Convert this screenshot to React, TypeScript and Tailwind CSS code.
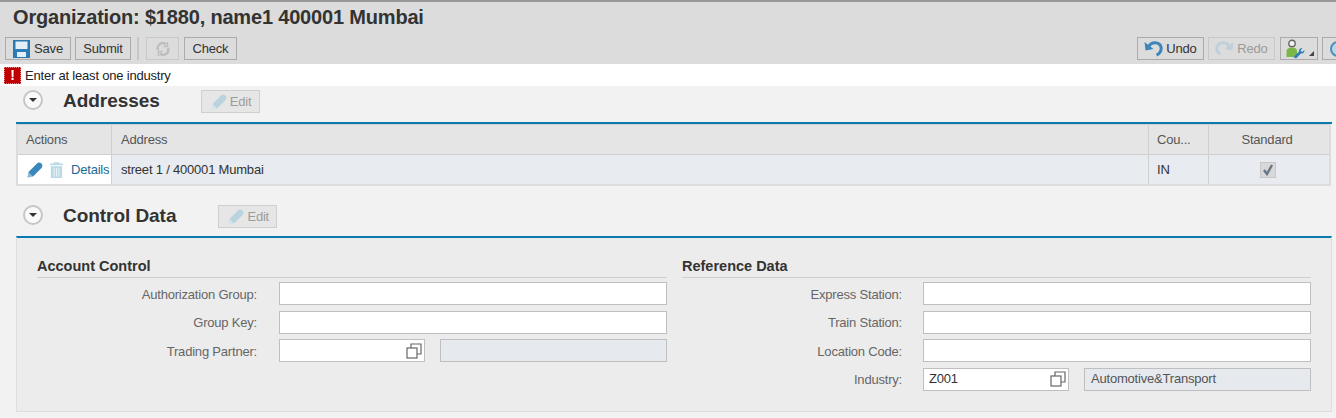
import React from "react";

const Btn = ({ children, className = "", disabled = false }: { children: React.ReactNode; className?: string; disabled?: boolean }) => (
  <div className={`h-[23px] flex items-center justify-center shrink-0 border text-[13px] tracking-[-0.2px] leading-none ${disabled ? "border-[#c8c8c8] text-[#9a9a9a]" : "border-[#ababab] text-[#333333]"} ${className}`}>
    {children}
  </div>
);

const Pencil = ({ color, size = 16 }: { color: string; size?: number }) => (
  <svg width={size} height={size} viewBox="0 0 16 16" className="shrink-0">
    <path d="M0.5 15.5 L1.5 10 L10 1.5 C11.2 0.3 13 0.3 14.4 1.6 C15.7 3 15.7 4.8 14.5 6 L6 14.5 Z" fill={color} />
    <path d="M0.5 15.5 L1.5 10 L6 14.5 Z" fill="#ffffff" fillOpacity="0.4" />
  </svg>
);

const Collapse = () => (
  <div className="w-[20px] h-[20px] rounded-full bg-[#fafafa] border-2 border-[#c6c6c6] flex items-center justify-center shrink-0">
    <div className="w-0 h-0 border-l-[4px] border-r-[4px] border-t-[4px] border-l-transparent border-r-transparent border-t-[#333333]" />
  </div>
);

const Section = ({ title, className, editClass }: { title: string; className: string; editClass: string }) => (
  <div className={`flex items-center pl-[23px] ${className}`}>
    <Collapse />
    <div className="ml-[20px] text-[19px] font-bold text-[#333333] leading-none tracking-[-0.05px]">{title}</div>
    <div className={`mt-[3px] h-[23px] w-[59px] flex items-center pl-[9px] gap-[3px] border border-[#cfcfcf] bg-[#e6e6e6] text-[13px] tracking-[-0.2px] text-[#9c9c9c] ${editClass}`}>
      <Pencil color="#b9d3df" />
      <span>Edit</span>
    </div>
  </div>
);

const Copy = () => (
  <svg width="16" height="16" viewBox="0 0 16 16" fill="none" stroke="#666666" strokeWidth="1.2" className="shrink-0">
    <rect x="1" y="5" width="10" height="10" />
    <path d="M5 5 V1 H15 V11 H11" />
  </svg>
);

const Label = ({ children, className = "pr-[22px]" }: { children: React.ReactNode; className?: string }) => (
  <div className={`text-right text-[13px] tracking-[-0.2px] text-[#666666] pt-[1px] leading-none ${className}`}>{children}</div>
);

const Input = () => <div className="h-[23px] bg-white border border-[#bfbfbf]" />;

const Help = ({ value = "" }: { value?: string }) => (
  <div className="h-[23px] w-[146px] bg-white border border-[#bfbfbf] flex items-center justify-between pl-[5px] pr-[2px] text-[13px] tracking-[-0.2px] text-[#333333]">
    <span>{value}</span>
    <Copy />
  </div>
);

const Desc = ({ value = "" }: { value?: string }) => (
  <div className="h-[23px] ml-[15px] flex-1 bg-[#e6e9ed] border border-[#bfbfbf] flex items-center pl-[6px] text-[13px] tracking-[-0.2px] text-[#555555]">{value}</div>
);

const Group = ({ title, rows, className, gridClass }: { title: string; rows: React.ReactNode[][]; className: string; gridClass: string }) => (
  <div className={className}>
    <div className="h-[28px] pt-[6px] border-b border-[#cfcfcf] text-[14.5px] font-bold text-[#333333] leading-[20px]">{title}</div>
    <div className={`grid items-center auto-rows-[23px] gap-y-[5.5px] mt-[4px] ${gridClass}`}>
      {rows.flat().map((c, i) => (
        <React.Fragment key={i}>{c}</React.Fragment>
      ))}
    </div>
  </div>
);

const headCell = "h-[31px] bg-[#e5e5e5] border-y border-[#cfcfcf] flex items-center text-[#555555]";

export default function App() {
  return (
    <div className="w-[1336px] h-[418px] overflow-hidden bg-[#f2f2f2] font-['Liberation_Sans',Arial,sans-serif]">
      <div className="h-[64px] bg-[#dcdcdc] border-t-2 border-[#999999] overflow-hidden">
        <div className="h-[35px] pl-[13px] pt-[3px] text-[20px] font-bold leading-[24px] tracking-[-0.18px] text-[#333333]">
          Organization: $1880, name1 400001 Mumbai
        </div>
        <div className="flex items-center pl-[5px] w-[1356px]">
          <Btn className="w-[66px] gap-[4px]">
            <svg width="17" height="18" viewBox="0 0 17 18" className="shrink-0">
              <rect x="0.75" y="0.75" width="15.5" height="16.5" fill="#2a7db8" stroke="#2a78b0" strokeWidth="1.5" />
              <rect x="2.5" y="1.5" width="12" height="7.5" fill="#e3eef6" />
              <rect x="4" y="12" width="9" height="5" fill="#e3eef6" />
            </svg>
            <span>Save</span>
          </Btn>
          <Btn className="w-[56px] ml-[4px]">Submit</Btn>
          <div className="w-[2px] h-[23px] bg-[#c6c6c6] ml-[6px]" />
          <Btn disabled className="w-[33px] ml-[7px]">
            <svg width="16" height="16" viewBox="0 0 16 16" fill="none" stroke="#bdbdbd" strokeWidth="2.4">
              <path d="M3 9 A5 5 0 0 1 11 3.5" />
              <path d="M13 7 A5 5 0 0 1 5 12.5" />
              <path d="M12.5 1 V5.5 H8.5" strokeWidth="1.4" />
              <path d="M3.5 15 V10.5 H7.5" strokeWidth="1.4" />
            </svg>
          </Btn>
          <Btn className="w-[53px] ml-[5px]">Check</Btn>
          <div className="flex-1" />
          <Btn className="w-[67px] gap-[3px]">
            <svg width="19" height="17" viewBox="0 0 19 17" fill="none" className="shrink-0">
              <path d="M5 6.5 C7 1.5 15.5 1.5 17 7 C17.8 10.5 15.5 14 12.5 15" stroke="#3c86bb" strokeWidth="3" />
              <path d="M0.5 2 L1.5 10.5 L9.5 9 Z" fill="#3c86bb" />
            </svg>
            <span>Undo</span>
          </Btn>
          <Btn disabled className="w-[67px] ml-[4px] gap-[3px]">
            <svg width="19" height="17" viewBox="0 0 19 17" fill="none" className="shrink-0">
              <path d="M14 6.5 C12 1.5 3.5 1.5 2 7 C1.2 10.5 3 13 5.5 14" stroke="#c0d0da" strokeWidth="3" />
              <path d="M18.5 2 L17.5 10.5 L9.5 9 Z" fill="#c0d0da" />
            </svg>
            <span>Redo</span>
          </Btn>
          <Btn className="w-[38px] ml-[5px] relative">
            <svg width="20" height="20" viewBox="0 0 20 20" className="mr-[8px]">
              <circle cx="7" cy="4.5" r="3.2" fill="#f2f2f2" stroke="#666666" strokeWidth="1.4" />
              <path d="M1.5 18 V12.5 C1.5 9.5 4 8.5 7 8.5 C10 8.5 12 9.5 12 12 V18 Z" fill="#7ab648" />
              <path d="M8.5 18 L14 12.5 C13.5 10.5 15 9 17.5 9 L15.5 11.5 L17 13 L19.5 11 C19.5 13.5 18 15 16 14.5 L11 19.5 Z" fill="#2f7fb5" />
            </svg>
            <div className="absolute right-[3px] bottom-[3px] w-0 h-0 border-l-[5px] border-b-[5px] border-l-transparent border-b-[#444444]" />
          </Btn>
          <Btn className="w-[34px] ml-[4px] justify-start pl-[7px]">
            <div className="w-[16px] h-[16px] rounded-full bg-[#bcd6e8] border-2 border-[#4c8fbd]" />
          </Btn>
        </div>
      </div>

      <div className="h-[22px] bg-white flex items-center pl-[4px] gap-[4px] text-[13px] tracking-[-0.2px] text-[#222222]">
        <div className="w-[17px] h-[17px] bg-[#c00000] border border-dotted border-[#e88] flex items-center justify-center text-white text-[14px] font-bold leading-none">!</div>
        <span className="leading-none">Enter at least one industry</span>
      </div>

      <Section title="Addresses" className="h-[36px] pb-[8px]" editClass="ml-[41px]" />

      <div className="mx-[16px] border-t-2 border-[#0a7ab0] w-[1316px] h-[64px]">
        <div className="flex h-[62px] mr-[1px] border-x-2 border-b-2 border-[#dcdcdc] text-[13px] tracking-[-0.2px]">
          <div className="w-[94px] flex flex-col border-r border-[#d0d0d0]">
            <div className={`${headCell} pl-[8px]`}>Actions</div>
            <div className="flex-1 bg-white flex items-center pl-[9px]">
              <Pencil color="#3a87bb" />
              <svg width="15" height="18" viewBox="0 0 16 18" className="ml-[6px] shrink-0">
                <path d="M5 2 V0.8 H11 V2 H15 V4 H1 V2 Z M2 5 H14 V17.5 H2 Z" fill="#bcd9e8" />
                <path d="M5.5 7 V16 M8 7 V16 M10.5 7 V16" stroke="#eef6fa" strokeWidth="1" />
              </svg>
              <span className="ml-[7px] text-[#1a6a96]">Details</span>
            </div>
          </div>
          <div className="flex-1 flex flex-col border-r border-[#d0d0d0]">
            <div className={`${headCell} pl-[9px]`}>Address</div>
            <div className="flex-1 bg-[#e8ebef] flex items-center pl-[9px] text-[#333333]">street 1 / 400001 Mumbai</div>
          </div>
          <div className="w-[60px] flex flex-col border-r border-[#d0d0d0]">
            <div className={`${headCell} pl-[8px]`}>Cou...</div>
            <div className="flex-1 bg-[#e8ebef] flex items-center pl-[8px] text-[#333333]">IN</div>
          </div>
          <div className="w-[120px] flex flex-col">
            <div className={`${headCell} justify-center pr-[4px]`}>Standard</div>
            <div className="flex-1 bg-[#e8ebef] flex items-center justify-center pr-[3px]">
              <div className="w-[16px] h-[16px] bg-[#d8d8d8] border border-[#c8c8c8] flex items-center justify-center">
                <svg width="12" height="12" viewBox="0 0 12 12" fill="none" stroke="#667788" strokeWidth="2.4">
                  <path d="M2 6 L5 10 L10 1" />
                </svg>
              </div>
            </div>
          </div>
        </div>
      </div>

      <div className="h-[12px]" />
      <Section title="Control Data" className="h-[38px] pb-[4px]" editClass="ml-[42px]" />

      <div className="mx-[16px] w-[1316px] h-[176px] border-t-2 border-[#0a7ab0] bg-[#ececec] border-x border-x-[#dddddd] border-b border-b-[#dddddd] pt-[12px] pl-[20px] flex">
        <Group
          title="Account Control"
          className="w-[630px]"
          gridClass="grid-cols-[242px_388px]"
          rows={[
            [<Label>Authorization Group:</Label>, <Input />],
            [<Label>Group Key:</Label>, <Input />],
            [<Label>Trading Partner:</Label>, <div className="flex"><Help /><Desc /></div>],
          ]}
        />
        <Group
          title="Reference Data"
          className="ml-[15px] w-[629px]"
          gridClass="grid-cols-[241px_388px]"
          rows={[
            [<Label className="pr-[21px]">Express Station:</Label>, <Input />],
            [<Label className="pr-[21px]">Train Station:</Label>, <Input />],
            [<Label className="pr-[21px]">Location Code:</Label>, <Input />],
            [<Label className="pr-[21px]">Industry:</Label>, <div className="flex"><Help value="Z001" /><Desc value="Automotive&Transport" /></div>],
          ]}
        />
      </div>
    </div>
  );
}
